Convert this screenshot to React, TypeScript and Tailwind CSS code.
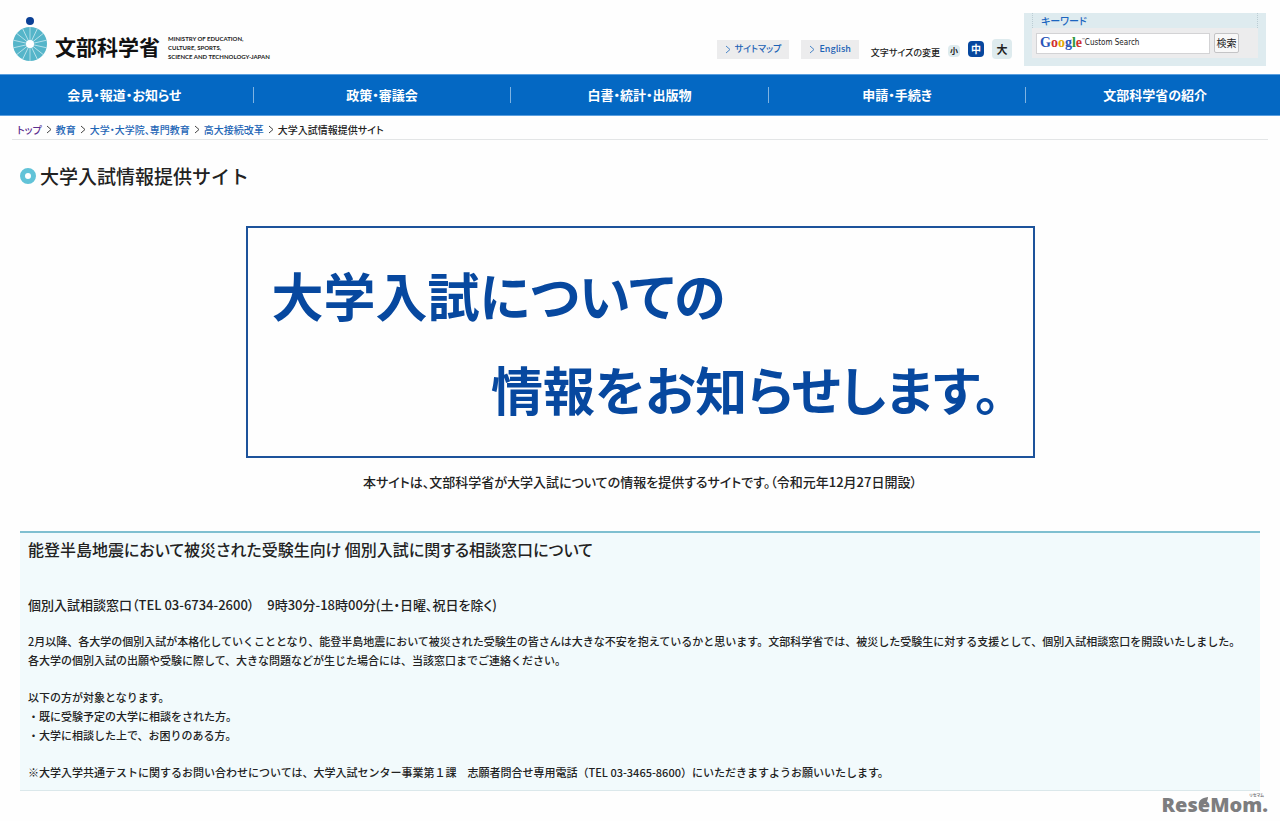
import type { ReactNode } from "react";

const navItems = [
  "会見・報道・お知らせ",
  "政策・審議会",
  "白書・統計・出版物",
  "申請・手続き",
  "文部科学省の紹介",
];

const crumbs = ["トップ", "教育", "大学・大学院、専門教育", "高大接続改革"];

const googleLetters = [
  { char: "G", color: "text-[#2a56b8]" },
  { char: "o", color: "text-[#d0322d]" },
  { char: "o", color: "text-[#e0a800]" },
  { char: "g", color: "text-[#2a56b8]" },
  { char: "l", color: "text-[#2f9a3c]" },
  { char: "e", color: "text-[#d0322d]" },
];

function LogoMark() {
  const spokes = Array.from({ length: 14 }, (_, i) => (i * 360) / 14);

  return (
    <svg width="34" height="45" viewBox="0 0 34 45" aria-hidden="true">
      <circle cx="17" cy="4" r="4" fill="#0a3f95" />
      <circle cx="17" cy="27" r="17" fill="#55b5c9" />
      {spokes.map((angle) => (
        <line
          key={angle}
          x1="17"
          y1="27"
          x2="17"
          y2="10"
          stroke="#c4e6ee"
          strokeWidth="0.8"
          transform={`rotate(${angle} 17 27)`}
        />
      ))}
      <circle cx="17" cy="27" r="4" fill="#fff" />
    </svg>
  );
}

function Chevron({ className }: { className: string }) {
  return (
    <svg width="6" height="9" viewBox="0 0 6 9" className={className} aria-hidden="true">
      <path d="M1 1 L5 4.5 L1 8" fill="none" stroke="currentColor" />
    </svg>
  );
}

function HeaderLink({ children }: { children: ReactNode }) {
  return (
    <a
      href="#"
      className="flex h-[19px] items-center gap-1 bg-[#ececed] px-2 text-[9px] font-medium text-[#1c62b5]"
    >
      <Chevron className="text-[#4a86c8]" />
      {children}
    </a>
  );
}

function FontSizeSwitch() {
  return (
    <div className="flex items-center gap-2">
      <span className="pt-2 text-[9px] leading-4 font-medium">文字サイズの変更</span>
      <button className="mt-1 size-3 rounded-sm bg-[#deebee] text-[8px] leading-3 font-bold">
        小
      </button>
      <button className="size-4 rounded-sm bg-[#07479e] text-[10px] leading-4 font-bold text-white">
        中
      </button>
      <button className="size-5 rounded-sm bg-[#deebee] text-[11px] leading-5 font-bold">
        大
      </button>
    </div>
  );
}

function SearchBox() {
  return (
    <form className="h-[53px] w-[242px] bg-[#deebef] px-2">
      <label
        htmlFor="keyword"
        className="flex h-[15px] items-center border-x border-dotted border-[#bccdd4] px-2 text-[10px] font-medium text-[#1c66c0]"
      >
        キーワード
      </label>
      <div className="flex h-[30px] items-center gap-1 bg-[#ececed] px-1">
        <div className="relative">
          <input
            id="keyword"
            type="text"
            className="block h-[21px] w-[174px] border border-[#d3d3d5] bg-white px-1 text-xs"
          />
          <div className="pointer-events-none absolute inset-y-0 left-1 flex items-center">
            <span className="font-['Liberation_Serif',serif] text-[14px] leading-none font-bold">
              {googleLetters.map((letter, i) => (
                <span key={i} className={letter.color}>
                  {letter.char}
                </span>
              ))}
            </span>
            <span className="pb-2 text-[4px] leading-none text-gray-500">™</span>
            <span className="font-['DejaVu_Sans_Condensed','DejaVu_Sans',sans-serif] text-[8px]">
              Custom Search
            </span>
          </div>
        </div>
        <button
          type="button"
          className="h-5 w-[25px] rounded-xs border border-[#c4c4c6] bg-[#f8f8f8] text-[10px] leading-none"
        >
          検索
        </button>
      </div>
    </form>
  );
}

function Header() {
  return (
    <header className="flex h-[74px] items-start justify-between pr-[14px] pl-[13px]">
      <a href="#" className="flex items-center pt-[17px]">
        <LogoMark />
        <span className="ml-2 pt-3 text-[21px] leading-8 font-bold text-[#111]">文部科学省</span>
        <span className="ml-2 pt-4 font-['Lato',sans-serif] text-[6px] leading-[9px] font-bold">
          MINISTRY OF EDUCATION,
          <br />
          CULTURE, SPORTS,
          <br />
          SCIENCE AND TECHNOLOGY-JAPAN
        </span>
      </a>
      <div className="flex items-start gap-3 pt-[13px]">
        <div className="flex items-center gap-3 pt-6">
          <HeaderLink>サイトマップ</HeaderLink>
          <HeaderLink>English</HeaderLink>
          <FontSizeSwitch />
        </div>
        <SearchBox />
      </div>
    </header>
  );
}

function MainNav() {
  return (
    <nav className="overflow-hidden border-y border-[#5b9fdf] bg-[#0468c3]">
      <div className="-mx-1 grid h-10 grid-cols-5 items-center">
        {navItems.map((item) => (
          <a
            key={item}
            href="#"
            className="border-r border-[#7fb3e2] text-center text-[13px] leading-4 font-bold text-white last:border-r-0"
          >
            {item}
          </a>
        ))}
      </div>
    </nav>
  );
}

function Breadcrumb() {
  return (
    <div className="mx-3 flex h-6 items-center gap-1 border-b border-[#e3e5e6] px-[5px] pt-1 text-[10px] font-medium">
      {crumbs.map((crumb) => (
        <span key={crumb} className="flex items-center gap-1">
          <a
            href="#"
            className={crumb === "トップ" ? "text-[#5b2f91]" : "text-[#1f66b6]"}
          >
            {crumb}
          </a>
          <Chevron className="text-[#444]" />
        </span>
      ))}
      <span>大学入試情報提供サイト</span>
    </div>
  );
}

function Banner() {
  return (
    <div className="mx-auto flex h-[232px] w-[789px] max-w-full flex-col justify-center border-2 border-[#1d539b] px-6 text-[52px] leading-[94px] font-bold text-[#07489f]">
      <p>大学入試についての</p>
      <p className="pr-2 text-right">情報をお知らせします。</p>
    </div>
  );
}

function Notice() {
  return (
    <section className="mt-[39px] border-t-2 border-b border-t-[#7fbfd0] border-b-[#dbe8eb] bg-[#f2fafc] px-2 pb-2">
      <h2 className="pt-[6px] text-base leading-5 font-medium">
        能登半島地震において被災された受験生向け 個別入試に関する相談窓口について
      </h2>
      <h3 className="mt-9 text-[13px] leading-5 font-medium">
        個別入試相談窓口（TEL 03-6734-2600）　9時30分-18時00分(土・日曜、祝日を除く)
      </h3>
      <div className="mt-4 space-y-[18px] pt-px text-[11px] leading-[19px] font-medium [font-feature-settings:normal]">
        <p>
          2月以降、各大学の個別入試が本格化していくこととなり、能登半島地震において被災された受験生の皆さんは大きな不安を抱えているかと思います。文部科学省では、被災した受験生に対する支援として、個別入試相談窓口を開設いたしました。
          <br />
          各大学の個別入試の出願や受験に際して、大きな問題などが生じた場合には、当該窓口までご連絡ください。
        </p>
        <p>
          以下の方が対象となります。
          <br />
          ・既に受験予定の大学に相談をされた方。
          <br />
          ・大学に相談した上で、お困りのある方。
        </p>
        <p>
          ※大学入学共通テストに関するお問い合わせについては、大学入試センター事業第１課　志願者問合せ専用電話（TEL
          03-3465-8600）にいただきますようお願いいたします。
        </p>
      </div>
    </section>
  );
}

function ReseMomMark() {
  return (
    <div className="flex flex-col text-[#7d7d7f]">
      <span className="self-end pt-[2px] pr-1 text-[4px] leading-[4px] font-bold">リセマム</span>
      <span className="relative font-['Open_Sans',sans-serif] text-[20px] leading-4 font-extrabold">
        ReseMom.
        <svg
          width="11"
          height="12"
          viewBox="0 0 12 13"
          className="absolute top-0 left-9"
          aria-hidden="true"
        >
          <path d="M11 0 C4 1 0 4 1 9 C5 10 10 8 11 0 Z" fill="currentColor" />
        </svg>
      </span>
    </div>
  );
}

export default function App() {
  return (
    <div className="bg-[#fefefe] font-['Noto_Sans_CJK_JP',sans-serif] text-[#222] [font-feature-settings:'palt']">
      <Header />
      <MainNav />
      <Breadcrumb />
      <main className="px-5">
        <h1 className="flex items-center gap-1 pt-5 text-[19px] leading-8 font-medium [font-feature-settings:normal]">
          <span className="size-4 rounded-full border-5 border-[#62c3d8] bg-white" />
          大学入試情報提供サイト
        </h1>
        <div className="pt-[34px]">
          <Banner />
        </div>
        <p className="mt-[14px] text-center text-[13px] leading-5 font-medium">
          本サイトは、文部科学省が大学入試についての情報を提供するサイトです。（令和元年12月27日開設）
        </p>
        <Notice />
      </main>
      <footer className="flex justify-end pr-3 pb-2">
        <ReseMomMark />
      </footer>
    </div>
  );
}
